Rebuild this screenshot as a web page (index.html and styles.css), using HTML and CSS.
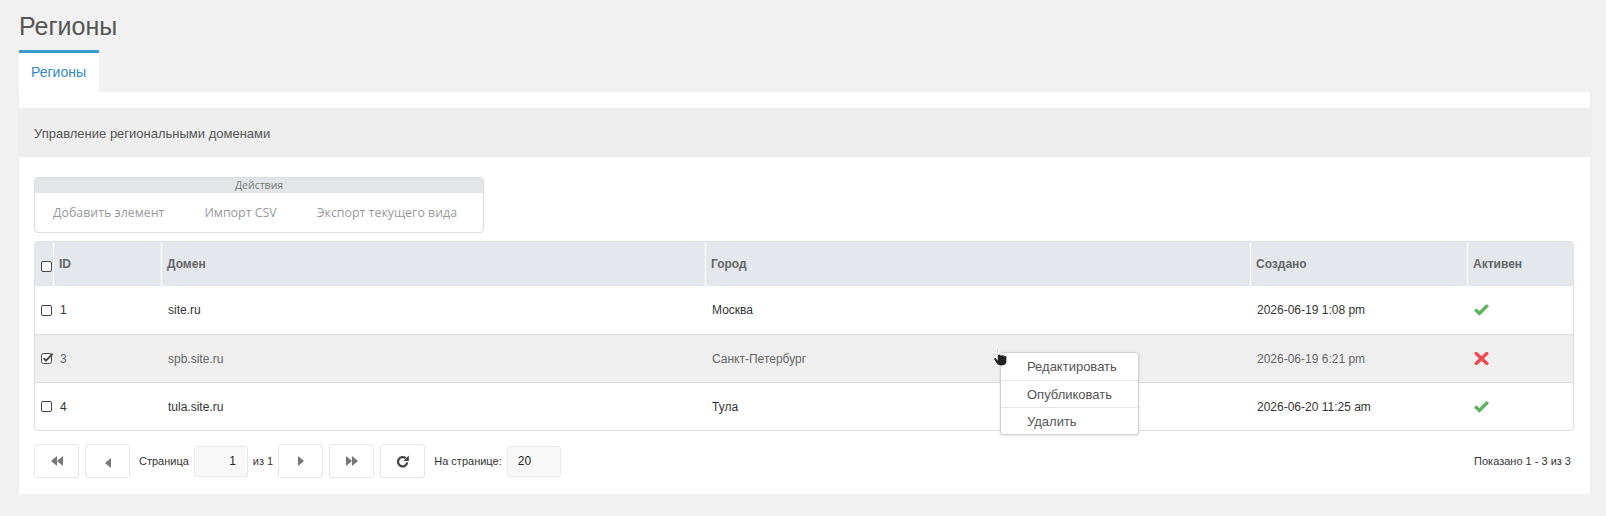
FILE: index.html
```html
<!DOCTYPE html>
<html lang="ru">
<head>
<meta charset="utf-8">
<title>Регионы</title>
<link rel="stylesheet" href="styles.css">
</head>
<body>
<h1 class="page-title">Регионы</h1>
<div class="tabs">
  <div class="tab active">Регионы</div>
</div>
<div class="panel">
  <div class="panel-head">Управление региональными доменами</div>
  <div class="panel-body">
    <div class="actions">
      <div class="actions-title">Действия</div>
      <div class="actions-items">
        <span class="action">Добавить элемент</span>
        <span class="action">Импорт CSV</span>
        <span class="action">Экспорт текущего вида</span>
      </div>
    </div>

    <div class="grid">
      <table>
        <colgroup>
          <col class="c-check">
          <col class="c-id">
          <col class="c-domain">
          <col class="c-city">
          <col class="c-created">
          <col class="c-active">
        </colgroup>
        <thead>
          <tr>
            <th class="cell-check"><span class="cb"></span></th>
            <th>ID</th>
            <th>Домен</th>
            <th>Город</th>
            <th>Создано</th>
            <th>Активен</th>
          </tr>
        </thead>
        <tbody>
          <tr>
            <td class="cell-check"><span class="cb"></span></td>
            <td>1</td>
            <td>site.ru</td>
            <td>Москва</td>
            <td>2026-06-19 1:08 pm</td>
            <td><svg class="ico-ok" width="15" height="12" viewBox="0 0 15 12"><polygon points="0,6.6 2.4,4.3 5.4,7.1 12.6,0 15,2.3 5.4,11.8" fill="#5cb35a"/></svg></td>
          </tr>
          <tr class="selected">
            <td class="cell-check"><svg class="cb-checked" width="13" height="12" viewBox="0 0 13 12"><rect x="0.5" y="1.5" width="10" height="10" rx="2" fill="#fff" stroke="#444"/><path d="M2.6 6.2 L5 8.6 L11.6 1.6" fill="none" stroke="#444" stroke-width="1.9"/></svg></td>
            <td>3</td>
            <td>spb.site.ru</td>
            <td>Санкт-Петербург</td>
            <td>2026-06-19 6:21 pm</td>
            <td><svg class="ico-no" width="15" height="13" viewBox="0 0 15 13"><path d="M2.2 1.6 L12.8 11.4 M12.8 1.6 L2.2 11.4" stroke="#ea4a52" stroke-width="3.4" stroke-linecap="round"/></svg></td>
          </tr>
          <tr>
            <td class="cell-check"><span class="cb"></span></td>
            <td>4</td>
            <td>tula.site.ru</td>
            <td>Тула</td>
            <td>2026-06-20 11:25 am</td>
            <td><svg class="ico-ok" width="15" height="12" viewBox="0 0 15 12"><polygon points="0,6.6 2.4,4.3 5.4,7.1 12.6,0 15,2.3 5.4,11.8" fill="#5cb35a"/></svg></td>
          </tr>
        </tbody>
      </table>
    </div>

    <div class="pager">
      <button class="pg-btn" type="button"><svg width="12" height="10" viewBox="0 0 12 10"><polygon points="6,0 0,5 6,10" fill="#777"/><polygon points="12,0 6,5 12,10" fill="#777"/></svg></button>
      <button class="pg-btn pg-low" type="button"><svg width="6" height="10" viewBox="0 0 6 10"><polygon points="6,0 0,5 6,10" fill="#777"/></svg></button>
      <span class="pg-label">Страница</span>
      <input class="pg-input pg-num" type="text" value="1" readonly>
      <span class="pg-of">из 1</span>
      <button class="pg-btn pg-after" type="button"><svg width="6" height="10" viewBox="0 0 6 10"><polygon points="0,0 6,5 0,10" fill="#777"/></svg></button>
      <button class="pg-btn" type="button"><svg width="12" height="10" viewBox="0 0 12 10"><polygon points="0,0 6,5 0,10" fill="#777"/><polygon points="6,0 12,5 6,10" fill="#777"/></svg></button>
      <button class="pg-btn" type="button"><svg width="14" height="13" viewBox="0 0 14 13"><path d="M11.2 7.4 A4.6 4.6 0 1 1 9.6 3.2" fill="none" stroke="#444" stroke-width="2.3"/><polygon points="12.8,0.6 12.8,6 7.4,6" fill="#444"/></svg></button>
      <span class="pg-label">На странице:</span>
      <input class="pg-input pg-size" type="text" value="20" readonly>
      <span class="pager-info">Показано 1 - 3 из 3</span>
    </div>
  </div>
</div>

<div class="ctx-menu">
  <div class="ctx-item">Редактировать</div>
  <div class="ctx-item">Опубликовать</div>
  <div class="ctx-item">Удалить</div>
</div>
<svg class="cursor" width="19" height="22" viewBox="0 0 18 21"><path d="M4.5 1c.9 0 1.6.7 1.6 1.6v5.3c.3-.2.7-.3 1.1-.3.7 0 1.3.4 1.5 1 .3-.3.8-.5 1.3-.5.7 0 1.3.5 1.5 1.1.3-.2.6-.3 1-.3 1 0 1.7.8 1.7 1.7v3.7c0 2.7-2 4.7-4.7 4.7H8c-1.6 0-2.8-.7-3.7-2L1.8 13.5c-.5-.8-.3-1.8.4-2.2.7-.4 1.5-.2 2 .4l.7.9V2.6C4.9 1.7 3.7 1 4.5 1z" fill="#222" stroke="#fff" stroke-width="1"/></svg>
</body>
</html>
```

FILE: styles.css
```css
* {
  box-sizing: border-box;
}

body {
  margin: 0;
  padding: 12px 16px 0 19px;
  background: #f1f1f1;
  font-family: "Liberation Sans", Arial, sans-serif;
  font-size: 12px;
  color: #333;
}

.page-title {
  margin: 0;
  font-size: 25px;
  line-height: 28px;
  font-weight: normal;
  color: #555;
}

.tabs {
  display: flex;
  margin-top: 10px;
}

.tab {
  width: 80px;
  height: 42px;
  border-top: 3px solid #3a9acb;
  background: #fff;
  color: #2f8bc0;
  font-size: 14px;
  line-height: 39px;
  padding-left: 12px;
}

.panel {
  background: #fff;
  padding-top: 16px;
  box-shadow: 0 1px 2px rgba(0, 0, 0, 0.06);
}

.panel-head {
  height: 49px;
  line-height: 51px;
  padding-left: 15px;
  background: #eeeeee;
  font-size: 13px;
  color: #555;
}

.panel-body {
  padding: 20px 16px 16px 15px;
}

/* actions box */
.actions {
  width: 450px;
  border: 1px solid #dcdcdc;
  border-radius: 4px;
  overflow: hidden;
}

.actions-title {
  height: 15px;
  line-height: 15px;
  background: #e3e5e8;
  text-align: center;
  font-family: "Open Sans", "Liberation Sans", sans-serif;
  font-size: 10.5px;
  color: #777;
}

.actions-items {
  display: flex;
  align-items: center;
  gap: 40px;
  height: 39px;
  padding-left: 18px;
}

.action {
  font-family: "Open Sans", "Liberation Sans", sans-serif;
  font-size: 12.4px;
  color: #999;
}

/* grid */
.grid {
  margin-top: 8px;
  border: 1px solid #dddddd;
  border-radius: 4px;
  overflow: hidden;
}

table {
  width: 100%;
  border-collapse: separate;
  border-spacing: 0;
  table-layout: fixed;
}

.c-check { width: 18px; }
.c-id { width: 108px; }
.c-domain { width: 544px; }
.c-city { width: 545px; }
.c-created { width: 217px; }
.c-active { width: 106px; }

th {
  height: 44px;
  background: #e4e7eb;
  text-align: left;
  font-weight: bold;
  color: #666;
  padding: 0 0 0 5px;
  border-left: 1px solid #fff;
}

th.cell-check {
  border-left: none;
  padding-left: 6px;
}

td {
  height: 48px;
  padding: 0 0 0 7px;
  color: #333;
  vertical-align: middle;
}

td.cell-check {
  padding-left: 6px;
}

tbody tr + tr td {
  border-top: 1px solid #dddddd;
}

tr.selected td {
  background: #efefef;
  color: #666;
}

.cb {
  display: block;
  width: 11px;
  height: 11px;
  border: 1px solid #444;
  border-radius: 2px;
  background: #fff;
}

th .cb {
  margin-top: 4px;
}

.cb-checked {
  display: block;
  margin-top: -1px;
}

.ico-ok,
.ico-no {
  display: block;
}

/* pager */
.pager {
  display: flex;
  align-items: center;
  margin-top: 13px;
  height: 34px;
  font-size: 11px;
}

.pg-btn {
  width: 45px;
  height: 34px;
  margin: 0 0 0 6px;
  padding: 0;
  border: 1px solid #e6e6e6;
  border-radius: 3px;
  background: #fff;
  display: flex;
  align-items: center;
  justify-content: center;
}

.pg-btn:first-child {
  margin-left: 0;
}

.pg-low svg {
  margin-top: 3px;
}

.pg-btn.pg-after {
  margin-left: 5px;
}

.pg-label {
  margin-left: 9px;
  color: #333;
}

.pg-of {
  margin-left: 5px;
  color: #333;
}

.pg-input {
  width: 54px;
  height: 31px;
  margin-left: 5px;
  border: 1px solid #e8e8e8;
  border-radius: 3px;
  background: #f8f8f8;
  font-family: "Liberation Sans", Arial, sans-serif;
  font-size: 12px;
  color: #222;
  outline: none;
}

.pg-num {
  text-align: right;
  padding: 0 11px 0 4px;
}

.pg-size {
  padding: 0 4px 0 10px;
}

.pager-info {
  margin-left: auto;
  padding-right: 3px;
  color: #333;
}

/* context menu */
.ctx-menu {
  position: absolute;
  left: 1000px;
  top: 352px;
  width: 139px;
  background: #fff;
  border: 1px solid #cfcfcf;
  border-radius: 3px;
  box-shadow: 0 1px 3px rgba(0, 0, 0, 0.12);
  font-size: 13px;
  color: #555;
}

.ctx-item {
  height: 27px;
  line-height: 27px;
  padding-left: 26px;
}

.ctx-item + .ctx-item {
  border-top: 1px solid #e6e6e6;
}

.cursor {
  position: absolute;
  left: 992px;
  top: 346px;
}
```
